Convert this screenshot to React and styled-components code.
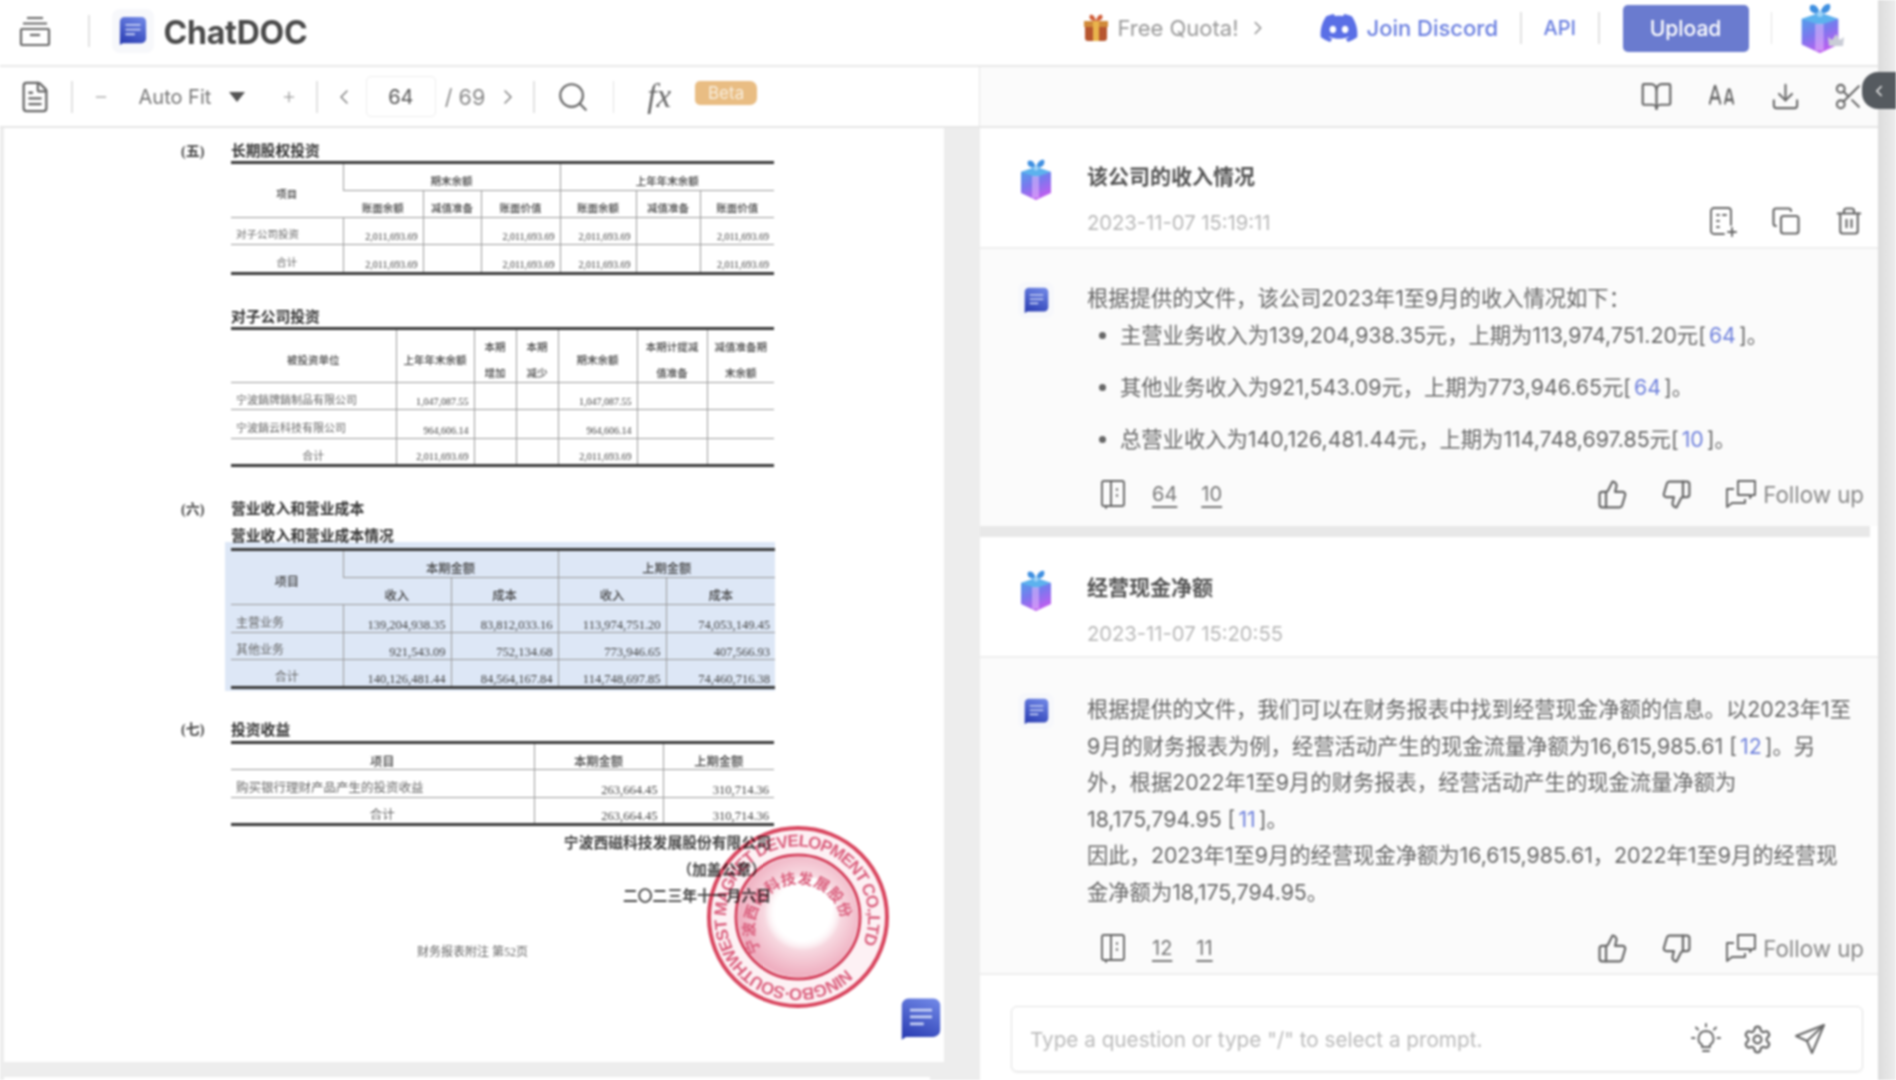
import React from 'react';
import styled, { createGlobalStyle } from 'styled-components';
import {
  FileText, Minus, Plus, ChevronLeft, ChevronRight, Search, BookOpen, ALargeSmall,
  Download, Scissors, Copy, Trash2, ThumbsUp, ThumbsDown, Settings
} from 'lucide-react';
import { FaDiscord } from 'react-icons/fa';

const GlobalStyle = createGlobalStyle`
  html, body { margin: 0; padding: 0; background: #fff; }
  body { font-family: Inter, "Noto Sans CJK SC", sans-serif; color: #666; }
  * { box-sizing: border-box; }
`;

const StackIcon = () => (
  <svg width="32" height="32" viewBox="0 0 32 32" fill="none" stroke="#666" strokeWidth="2.2">
    <path d="M8 3h16M4 8.5h24" />
    <rect x="2" y="14" width="28" height="16" rx="1" />
    <path d="M11 20h10" />
  </svg>
);

const LogoMark = ({ size = 30, gid = 'lg' }) => (
  <svg width={size} height={size} viewBox="0 0 30 32">
    <defs>
      <linearGradient id={gid} x1="0.7" y1="0" x2="0.3" y2="1">
        <stop offset="0" stopColor="#6d84e4" />
        <stop offset="1" stopColor="#2c3fb4" />
      </linearGradient>
    </defs>
    <path d="M6 1h18a5 5 0 0 1 5 5v18a5 5 0 0 1-5 5H4l-3 2V6a5 5 0 0 1 5-5z" fill={`url(#${gid})`} />
    <path d="M7 9.5h16M7 14.5h16M7 19.5h10" stroke="#c6d0f5" strokeWidth="2" />
  </svg>
);

const GiftBox = ({ w = 36, gid = 'gb' }) => (
  <svg width={w} height={w * 1.14} viewBox="0 0 36 41">
    <defs>
      <linearGradient id={gid} x1="0.2" y1="0" x2="0.6" y2="1">
        <stop offset="0" stopColor="#4da3ea" />
        <stop offset="0.5" stopColor="#7b78ee" />
        <stop offset="1" stopColor="#c45cf0" />
      </linearGradient>
    </defs>
    <path d="M3 13l15-5 15 5v21l-15 7-15-7z" fill={`url(#${gid})`} />
    <path d="M18 8l15 5-15 5-15-5z" fill="#5cb2ee" />
    <path d="M14 17h7v22h-7z" fill="#e4b8fb" opacity="0.55" />
    <path d="M10 2c4-2 7 2 8 7-5 0-10-2-8-7zM26 1c-4-1-7 3-8 8 5 0 10-3 8-8z" fill="#3f8fe0" />
    <circle cx="18" cy="9" r="2.5" fill="#9fd3f7" />
  </svg>
);

const QuotaGift = () => (
  <svg width="26" height="28" viewBox="0 0 26 28">
    <path d="M2 9h22v15a3 3 0 0 1-3 3H5a3 3 0 0 1-3-3z" fill="#b7562f" />
    <path d="M1 7h24v6H1z" fill="#d08a3a" />
    <path d="M10 7h6v20h-6z" fill="#e9b44c" />
    <path d="M7 1c3-1 5 2 6 6-4 0-8-2-6-6zM19 1c-3-1-5 2-6 6 4 0 8-2 6-6z" fill="#cf5b36" />
  </svg>
);

const Crown = () => (
  <svg width="16" height="14" viewBox="0 0 16 14">
    <path d="M1 12L0 3l4 3 4-6 4 6 4-3-1 9z" fill="#c9ccd6" />
  </svg>
);

const FileNoteIcon = () => (
  <svg width="30" height="32" viewBox="0 0 30 32" fill="none" stroke="#666" strokeWidth="1.9" strokeLinecap="round">
    <path d="M16 28H6a3 3 0 0 1-3-3V5a3 3 0 0 1 3-3h14a3 3 0 0 1 3 3v14" />
    <path d="M9 9h2M9 15h2M15 9h3M9 21h2" />
    <path d="M24 22v8M20 26h8" />
  </svg>
);

const NoteBookIcon = () => (
  <svg width="26" height="30" viewBox="0 0 26 30" fill="none" stroke="#666" strokeWidth="1.9" strokeLinecap="round">
    <rect x="2" y="2" width="22" height="25" rx="2" />
    <path d="M11 2v25M17 10v1M17 16v1M6 27v2" />
  </svg>
);

const FollowIcon = () => (
  <svg width="32" height="30" viewBox="0 0 32 30" fill="none" stroke="#666" strokeWidth="1.9" strokeLinejoin="round">
    <path d="M13 2h17v14h-3l-2 3v-3H13z" />
    <path d="M9 10H2v18l5-4h13v-4" />
  </svg>
);

const BulbIcon = () => (
  <svg width="30" height="32" viewBox="0 0 30 32" fill="none" stroke="#666" strokeWidth="1.9" strokeLinecap="round">
    <path d="M15 8a7.5 7.5 0 0 0-4 13.8V24h8v-2.2A7.5 7.5 0 0 0 15 8z" />
    <path d="M12 28h6M15 1v2.5M5 4.5l2 2M25 4.5l-2 2M1 15h2.5M26.5 15H29" />
  </svg>
);

const SendIcon = () => (
  <svg width="32" height="32" viewBox="0 0 32 32" fill="none" stroke="#666" strokeWidth="2" strokeLinejoin="round">
    <path d="M30 2L2 13l11 5 5 12z" />
    <path d="M13 18L30 2" />
  </svg>
);

const TABLE_ONE = {
  cols: [112, 80, 58, 79, 76, 64, 74],
  size: 10,
  head: 10.5,
  label: 10.5,
  heights: [28, 27, 27, 29],
  rows: [
    [{ t: '项目', rows: 2, c: 1, head: 1 }, { t: '期末余额', span: 3, c: 1, head: 1 }, { t: '上年年末余额', span: 3, c: 1, head: 1 }],
    ['账面余额', '减值准备', '账面价值', '账面余额', '减值准备', '账面价值'].map((t) => ({ t, c: 1, head: 1 })),
    [{ t: '对子公司投资', l: 1 }, '2,011,693.69', '', '2,011,693.69', '2,011,693.69', '', '2,011,693.69'],
    [{ t: '合计', c: 1 }, '2,011,693.69', '', '2,011,693.69', '2,011,693.69', '', '2,011,693.69']
  ]
};

const TABLE_TWO = {
  cols: [165, 78, 42, 42, 79, 70, 67],
  size: 10,
  head: 10.5,
  label: 11,
  heights: [54, 27, 29, 27],
  rows: [
    [
      { t: '被投资单位', c: 1, head: 1 },
      { t: '上年年末余额', c: 1, head: 1, w: 1 },
      { t: '本期增加', c: 1, head: 1, w: 1 },
      { t: '本期减少', c: 1, head: 1, w: 1 },
      { t: '期末余额', c: 1, head: 1 },
      { t: '本期计提减值准备', c: 1, head: 1, w: 1 },
      { t: '减值准备期末余额', c: 1, head: 1, w: 1 }
    ],
    [{ t: '宁波銷牌銷制品有限公司', l: 1 }, '1,047,087.55', '', '', '1,047,087.55', '', ''],
    [{ t: '宁波銷云科技有限公司', l: 1 }, '964,606.14', '', '', '964,606.14', '', ''],
    [{ t: '合计', c: 1 }, '2,011,693.69', '', '', '2,011,693.69', '', '']
  ]
};

const TABLE_THREE = {
  cols: [112, 108, 107, 108, 109],
  size: 12.5,
  head: 12.3,
  label: 12,
  heights: [28, 27, 28, 27, 28],
  rows: [
    [{ t: '项目', rows: 2, c: 1, head: 1 }, { t: '本期金额', span: 2, c: 1, head: 1 }, { t: '上期金额', span: 2, c: 1, head: 1 }],
    ['收入', '成本', '收入', '成本'].map((t) => ({ t, c: 1, head: 1 })),
    [{ t: '主营业务', l: 1 }, '139,204,938.35', '83,812,033.16', '113,974,751.20', '74,053,149.45'],
    [{ t: '其他业务', l: 1 }, '921,543.09', '752,134.68', '773,946.65', '407,566.93'],
    [{ t: '合计', c: 1 }, '140,126,481.44', '84,564,167.84', '114,748,697.85', '74,460,716.38']
  ]
};

const TABLE_FOUR = {
  cols: [303, 129, 111],
  size: 12.5,
  head: 12.3,
  label: 12.5,
  heights: [27, 28, 27],
  rows: [
    [{ t: '项目', c: 1, head: 1 }, { t: '本期金额', c: 1, head: 1 }, { t: '上期金额', c: 1, head: 1 }],
    [{ t: '购买银行理财产品产生的投资收益', l: 1 }, '263,664.45', '310,714.36'],
    [{ t: '合计', c: 1 }, '263,664.45', '310,714.36']
  ]
};

const SheetTable = ({ data }) => (
  <Sheet>
    <colgroup>
      {data.cols.map((w, i) => <col key={i} width={w} />)}
    </colgroup>
    <tbody>
      {data.rows.map((row, r) => (
        <SheetRow key={r} $h={data.heights[r]}>
          {row.map((cell, i) => {
            const c = typeof cell === 'string' ? { t: cell } : cell;
            const isText = c.head || c.l || c.c;
            return (
              <SheetCell
                key={i}
                colSpan={c.span}
                rowSpan={c.rows}
                $align={c.c ? 'center' : c.l ? 'left' : 'right'}
                $head={c.head}
                $wrap={c.w}
                $label={c.l || c.c}
                $fs={c.head ? data.head : c.l || c.c ? data.label : data.size}
              >
                {isText ? <CellText>{c.t}</CellText> : c.t}
              </SheetCell>
            );
          })}
        </SheetRow>
      ))}
    </tbody>
  </Sheet>
);

const Stamp = () => (
  <StampWrap>
    <svg width="190" height="190" viewBox="0 0 190 190">
      <defs>
        <radialGradient id="stampFade" cx="0.54" cy="0.46" r="0.52">
          <stop offset="0.42" stopColor="#fff" stopOpacity="0" />
          <stop offset="0.62" stopColor="#f7d8e0" />
          <stop offset="1" stopColor="#efb0c1" />
        </radialGradient>
        <path id="ringEn" d="M143 147 A71 71 0 1 1 151 138" />
        <path id="ringCn" d="M58 129 A44 44 0 1 1 139 100" />
      </defs>
      <circle cx="95" cy="95" r="89" fill="#fdf1f4" stroke="#d9465f" strokeWidth="4" />
      <circle cx="95" cy="95" r="62" fill="#fff" stroke="#d4405c" strokeWidth="3" />
      <circle cx="95" cy="95" r="60" fill="url(#stampFade)" />
      <path d="M97 56c12-5 24 3 30 14 7 13 3 24-6 32-8 13-19 24-32 15-7-10-19-14-15-29 2-15 11-28 23-32z" fill="#fff" />
      <StampText fontSize="17" fontWeight="700">
        <textPath href="#ringEn" textLength="415">NINGBO·SOUTHWEST MAGNET DEVELOPMENT CO.,LTD</textPath>
      </StampText>
      <StampText fontSize="15" fontWeight="700">
        <textPath href="#ringCn" textLength="215">宁波西磁科技发展股份有限公司</textPath>
      </StampText>
    </svg>
  </StampWrap>
);

const QuestionBlock = ({ gid, title, date, actions, top }) => (
  <Question $top={top}>
    <AvatarCell><GiftBox w={36} gid={gid} /></AvatarCell>
    <div>
      <QuestionTitle>{title}</QuestionTitle>
      <DateRow>
        <DateText>{date}</DateText>
        {actions && (
          <QuestionTools>
            <FileNoteIcon />
            <Copy size={30} strokeWidth={1.7} />
            <Trash2 size={30} strokeWidth={1.7} />
          </QuestionTools>
        )}
      </DateRow>
    </div>
  </Question>
);

const AnswerActions = ({ pages, top }) => (
  <Actions $top={top}>
    <NoteBookIcon />
    <PageRefs>
      {pages.map((p) => <PageRef key={p}>{p}</PageRef>)}
    </PageRefs>
    <ActionRight>
      <ThumbsUp size={31} strokeWidth={1.7} />
      <ThumbsDown size={31} strokeWidth={1.7} />
      <FollowUp>
        <FollowIcon />
        Follow up
      </FollowUp>
    </ActionRight>
  </Actions>
);

const App = () => (
  <>
    <GlobalStyle />
    <Shell>
      <Main>
        <Header>
          <StackIcon />
          <BarRule $left={37} $right={22} />
          <LogoTile><LogoMark /></LogoTile>
          <Brand>ChatDOC</Brand>
          <HeaderNav>
            <QuotaGift />
            <QuotaText>Free Quota!</QuotaText>
            <ChevronRight size={22} strokeWidth={1.5} color="#888" />
            <DiscordLink>
              <FaDiscord size={40} color="#5a6fe6" />
              Join Discord
            </DiscordLink>
            <BarRule $left={22} $right={22} />
            <ApiLink>API</ApiLink>
            <BarRule $left={22} $right={23} />
            <UploadButton>Upload</UploadButton>
            <BarRule $left={22} $right={26} />
            <AvatarWrap>
              <GiftBox w={44} gid="gbHead" />
              <CrownBadge><Crown /></CrownBadge>
            </AvatarWrap>
          </HeaderNav>
        </Header>

        <ToolRow>
          <DocTools>
            <FileText size={34} strokeWidth={1.6} />
            <BarRule $left={19} $right={20} />
            <Minus size={16} strokeWidth={1.6} color="#888" />
            <FitLabel>Auto Fit</FitLabel>
            <FitCaret />
            <PlusWrap><Plus size={16} strokeWidth={1.6} color="#888" /></PlusWrap>
            <BarRule $left={19} $right={14} />
            <ChevronLeft size={24} strokeWidth={1.4} color="#777" />
            <PageInput>64</PageInput>
            <PageTotal>/ 69</PageTotal>
            <ChevronRight size={24} strokeWidth={1.4} color="#777" />
            <BarRule $left={13} $right={21} />
            <Search size={34} strokeWidth={1.5} />
            <BarRule $left={23} $right={33} />
            <FxMark>fx</FxMark>
            <BetaTag>Beta</BetaTag>
          </DocTools>
          <ChatTools>
            <BookOpen size={33} strokeWidth={1.6} />
            <TallGlyph><ALargeSmall size={33} strokeWidth={1.6} /></TallGlyph>
            <Download size={31} strokeWidth={1.6} />
            <Scissors size={31} strokeWidth={1.6} />
          </ChatTools>
        </ToolRow>

        <Body>
          <DocPane>
            <Page>
              <SectionHead $top={11.5}>
                <SectionNo>(五)</SectionNo>
                <SectionTitle>长期股权投资</SectionTitle>
              </SectionHead>
              <TableBlock><SheetTable data={TABLE_ONE} /></TableBlock>

              <SectionHead $top={31}>
                <SectionNo />
                <SectionTitle>对子公司投资</SectionTitle>
              </SectionHead>
              <TableBlock><SheetTable data={TABLE_TWO} /></TableBlock>

              <SectionHead $top={31}>
                <SectionNo>(六)</SectionNo>
                <SectionTitle>营业收入和营业成本</SectionTitle>
              </SectionHead>
              <SectionHead $top={7}>
                <SectionNo />
                <SectionTitle>营业收入和营业成本情况</SectionTitle>
              </SectionHead>
              <HighlightBlock><SheetTable data={TABLE_THREE} /></HighlightBlock>

              <SectionHead $top={27.5}>
                <SectionNo>(七)</SectionNo>
                <SectionTitle>投资收益</SectionTitle>
              </SectionHead>
              <TableBlock $top={3}><SheetTable data={TABLE_FOUR} /></TableBlock>

              <SignBlock>
                <SignLine>宁波西磁科技发展股份有限公司</SignLine>
                <SignLine $indent={5}>（加盖公章）</SignLine>
                <SignLine>二〇二三年十一月六日</SignLine>
              </SignBlock>
              <PageFoot>财务报表附注 第52页</PageFoot>

              <Stamp />
              <ChatFab><LogoMark size={44} gid="lgFab" /></ChatFab>
            </Page>
            <NextPage />
          </DocPane>

          <ChatPane>
            <QuestionBlock gid="gbQ1" top={31} title="该公司的收入情况" date="2023-11-07 15:19:11" actions />
            <Answer $top={31} $bottom={15}>
              <AvatarCell $top={2}><LogoTile $small><LogoMark size={27} gid="lgA1" /></LogoTile></AvatarCell>
              <div>
                <AnswerText>根据提供的文件，该公司2023年1至9月的收入情况如下：</AnswerText>
                <Bullets>
                  <Bullet>主营业务收入为139,204,938.35元，上期为113,974,751.20元[<Ref>64</Ref>]。</Bullet>
                  <Bullet>其他业务收入为921,543.09元，上期为773,946.65元[<Ref>64</Ref>]。</Bullet>
                  <Bullet>总营业收入为140,126,481.44元，上期为114,748,697.85元[<Ref>10</Ref>]。</Bullet>
                </Bullets>
                <AnswerActions top={20} pages={['64', '10']} />
              </div>
            </Answer>
            <ThickRule />
            <QuestionBlock gid="gbQ2" top={33} title="经营现金净额" date="2023-11-07 15:20:55" />
            <Answer $top={33} $bottom={8}>
              <AvatarCell $top={2}><LogoTile $small><LogoMark size={27} gid="lgA2" /></LogoTile></AvatarCell>
              <div>
                <AnswerText>
                  根据提供的文件，我们可以在财务报表中找到经营现金净额的信息。以2023年1至<br />
                  9月的财务报表为例，经营活动产生的现金流量净额为16,615,985.61 [<Ref>12</Ref>]。另<br />
                  外，根据2022年1至9月的财务报表，经营活动产生的现金流量净额为<br />
                  18,175,794.95 [<Ref>11</Ref>]。<br />
                  因此，2023年1至9月的经营现金净额为16,615,985.61，2022年1至9月的经营现<br />
                  金净额为18,175,794.95。
                </AnswerText>
                <AnswerActions top={21} pages={['12', '11']} />
              </div>
            </Answer>
            <InputArea>
              <InputBox>
                <Placeholder>Type a question or type "/" to select a prompt.</Placeholder>
                <InputTools>
                  <BulbIcon />
                  <Settings size={31} strokeWidth={1.7} />
                  <SendIcon />
                </InputTools>
              </InputBox>
            </InputArea>
          </ChatPane>
        </Body>
      </Main>
      <SideStrip />
      <CollapseTab><ChevronLeft size={18} color="#fff" strokeWidth={1.6} /></CollapseTab>
    </Shell>
  </>
);

const Shell = styled.div`
  position: relative;
  display: flex;
  width: 1896px;
  height: 1080px;
  overflow: hidden;
  filter: blur(0.8px);
`;

const Main = styled.div`
  width: 1878px;
  display: flex;
  flex-direction: column;
`;

const SideStrip = styled.div`
  flex: 1;
  background: linear-gradient(90deg, #dcdcdc, #ececec);
`;

const CollapseTab = styled.div`
  position: absolute;
  right: 0;
  top: 72px;
  width: 34px;
  height: 37px;
  background: #555a5f;
  border-radius: 16px 0 0 16px;
  display: flex;
  align-items: center;
  justify-content: center;
`;

const Header = styled.header`
  height: 67px;
  flex: none;
  display: flex;
  align-items: center;
  padding: 0 36px 4px 19px;
  background: #fff;
  border-bottom: 2px solid #e8e8e8;
`;

const BarRule = styled.span`
  flex: none;
  width: 1.5px;
  height: 32px;
  background: #e2e2e2;
  margin: 0 ${(p) => p.$right}px 0 ${(p) => p.$left}px;
`;

const LogoTile = styled.div`
  display: flex;
  align-items: center;
  justify-content: center;
  width: ${(p) => (p.$small ? 36 : 42)}px;
  height: ${(p) => (p.$small ? 36 : 44)}px;
  border-radius: 8px;
  background: #f7f8fb;
`;

const Brand = styled.div`
  margin: 3px 0 0 10px;
  font-size: 32px;
  font-weight: 700;
  color: #4a4a4a;
  letter-spacing: -0.2px;
`;

const HeaderNav = styled.nav`
  margin: -5px 0 0 auto;
  display: flex;
  align-items: center;
  font-size: 22px;
`;

const QuotaText = styled.span`
  margin: 0 8px 0 8px;
  color: #999;
`;

const DiscordLink = styled.a`
  display: flex;
  align-items: center;
  gap: 8px;
  margin-left: 50px;
  color: #6a7fe0;
  font-weight: 500;
`;

const ApiLink = styled.a`
  color: #6a7fe0;
  font-size: 20px;
  font-weight: 500;
`;

const UploadButton = styled.button`
  width: 126px;
  height: 47px;
  border: none;
  border-radius: 5px;
  background: #6a7bcf;
  color: #fff;
  font: 500 21px Inter, sans-serif;
`;

const AvatarWrap = styled.div`
  position: relative;
  display: flex;
  width: 44px;
`;

const CrownBadge = styled.span`
  position: absolute;
  right: -2px;
  bottom: 0;
`;

const ToolRow = styled.div`
  height: 61px;
  flex: none;
  display: flex;
  background: #fff;
  border-bottom: 2px solid #e6e6e6;
`;

const DocTools = styled.div`
  width: 980px;
  flex: none;
  display: flex;
  align-items: center;
  padding-left: 18px;
  border-right: 1.5px solid #e6e6e6;
  color: #666;
`;

const FitLabel = styled.span`
  margin-left: 30px;
  font-size: 20px;
  color: #777;
`;

const FitCaret = styled.span`
  margin-left: 18px;
  border-left: 8.5px solid transparent;
  border-right: 8.5px solid transparent;
  border-top: 10px solid #555;
`;

const PlusWrap = styled.span`
  display: flex;
  margin-left: 36px;
`;

const PageInput = styled.div`
  width: 70px;
  height: 41px;
  margin-left: 10px;
  display: flex;
  align-items: center;
  justify-content: center;
  border: 1.5px solid #eee;
  border-radius: 5px;
  font-size: 20px;
  color: #555;
`;

const PageTotal = styled.span`
  margin: 0 11px 0 9px;
  font-size: 21.5px;
  color: #888;
`;

const FxMark = styled.span`
  font: italic 33px "Liberation Serif", serif;
  color: #666;
`;

const BetaTag = styled.span`
  margin: -8px 0 0 24px;
  width: 62px;
  height: 24px;
  display: flex;
  align-items: center;
  justify-content: center;
  border-radius: 5px 7px 7px 5px;
  background: #e9bd83;
  color: #f8eedd;
  font-size: 17px;
`;

const ChatTools = styled.div`
  flex: 1;
  display: flex;
  align-items: center;
  justify-content: flex-end;
  gap: 32px;
  padding-right: 14px;
  background: #fbfbfb;
  color: #666;
`;

const TallGlyph = styled.span`
  display: flex;
  transform: scale(0.85, 1.25);
`;

const Body = styled.div`
  flex: 1;
  min-height: 0;
  display: flex;
`;

const DocPane = styled.div`
  width: 980px;
  flex: none;
  padding: 0 36px 0 4px;
  background: #ededed;
  overflow: hidden;
`;

const Page = styled.div`
  position: relative;
  display: flow-root;
  height: 934px;
  padding-left: 177px;
  background: #fff;
  font-family: "Liberation Serif", "Noto Sans CJK SC", serif;
  color: #333;
`;

const NextPage = styled.div`
  height: 10px;
  width: 926px;
  margin-top: 15px;
  background: #fff;
`;

const SectionHead = styled.div`
  display: flex;
  align-items: center;
  height: 20px;
  margin-top: ${(p) => p.$top}px;
`;

const SectionNo = styled.span`
  width: 50px;
  font-size: 14px;
  font-weight: 700;
  color: #444;
`;

const SectionTitle = styled.span`
  font-size: 14.8px;
  font-weight: 700;
  color: #333;
`;

const TableBlock = styled.div`
  margin: ${(p) => p.$top || 1}px 0 0 50px;
  width: 543px;
`;

const HighlightBlock = styled.div`
  margin: -3px 0 0 44px;
  padding: 6px 0 2px 6px;
  width: 550px;
  background: #dde7f6;
`;

const Sheet = styled.table`
  width: 543px;
  table-layout: fixed;
  border-collapse: collapse;
  border-top: 3px solid #3a3a3a;
  border-bottom: 3px solid #3a3a3a;
  color: #444;
`;

const SheetRow = styled.tr`
  height: ${(p) => p.$h}px;
`;

const SheetCell = styled.td`
  padding: ${(p) => (p.$head ? '0 6px' : '0 5px 1px')};
  border-bottom: 1px solid #9a9a9a;
  border-left: 1px solid #9a9a9a;
  text-align: ${(p) => p.$align};
  vertical-align: ${(p) => (p.$head || p.$label ? 'middle' : 'bottom')};
  font-size: ${(p) => p.$fs}px;
  font-weight: ${(p) => (p.$head ? 500 : 400)};
  line-height: ${(p) => (p.$wrap ? '26px' : '12px')};
  white-space: ${(p) => (p.$wrap ? 'normal' : 'nowrap')};
  color: ${(p) => (p.$label && !p.$head ? '#666' : '#444')};
  &:first-child { border-left: none; }
`;

const CellText = styled.span`
  display: block;
  transform: translateY(5px);
`;

const SignBlock = styled.div`
  width: 590px;
  margin-top: 4px;
  text-align: right;
  font-size: 14.8px;
`;

const SignLine = styled.div`
  height: 26.5px;
  line-height: 26.5px;
  padding-right: ${(p) => p.$indent || 0}px;
  font-weight: 700;
  color: #444;
`;

const PageFoot = styled.div`
  margin: 32px 0 0 236px;
  font-size: 12px;
  color: #666;
`;

const StampWrap = styled.div`
  position: absolute;
  left: 699px;
  top: 694px;
  mix-blend-mode: multiply;
  display: flex;
`;

const StampText = styled.text`
  fill: #da5f7d;
  font-family: "Liberation Sans", "Noto Sans CJK SC", sans-serif;
`;

const ChatFab = styled.div`
  position: absolute;
  left: 895px;
  top: 869px;
  display: flex;
`;

const ChatPane = styled.div`
  flex: 1;
  min-width: 0;
  display: flex;
  flex-direction: column;
  background: #fff;
`;

const Question = styled.section`
  display: grid;
  grid-template-columns: 107px 1fr;
  height: 121px;
  padding: ${(p) => p.$top}px 14px 0 0;
  border-bottom: 2px solid #eee;
`;

const AvatarCell = styled.div`
  padding: ${(p) => p.$top || 0}px 0 0 38px;
`;

const QuestionTitle = styled.h3`
  margin: 0;
  font-size: 21px;
  font-weight: 600;
  line-height: 36px;
  color: #555;
`;

const DateRow = styled.div`
  display: flex;
  align-items: center;
  justify-content: space-between;
  min-height: 38px;
  margin-top: 8px;
`;

const DateText = styled.span`
  font-size: 20.2px;
  color: #b8b8b8;
`;

const QuestionTools = styled.div`
  display: flex;
  gap: 33px;
  color: #666;
`;

const Answer = styled.section`
  display: grid;
  grid-template-columns: 107px 1fr;
  padding: ${(p) => p.$top}px 14px ${(p) => p.$bottom}px 0;
  background: #fbfbfb;
`;

const AnswerText = styled.div`
  font-size: 21.3px;
  line-height: 36.5px;
  color: #666;
  white-space: nowrap;
`;

const Bullets = styled.ul`
  margin: 0;
  padding: 0 0 0 33px;
  color: #666;
`;

const Bullet = styled.li`
  font-size: 21.3px;
  line-height: 36.5px;
  margin-bottom: 15.5px;
  white-space: nowrap;
  &:last-child { margin-bottom: 0; }
`;

const Ref = styled.span`
  margin: 0 3px;
  color: #6f81dc;
`;

const Actions = styled.div`
  display: flex;
  align-items: center;
  height: 34px;
  margin: ${(p) => p.$top}px 0 0 13px;
  color: #666;
`;

const PageRefs = styled.div`
  display: flex;
  gap: 24px;
  margin-left: 26px;
`;

const PageRef = styled.span`
  font-size: 20px;
  color: #777;
  text-decoration: underline;
  text-underline-offset: 5px;
`;

const ActionRight = styled.div`
  margin-left: auto;
  display: flex;
  align-items: center;
  gap: 33px;
`;

const FollowUp = styled.span`
  display: flex;
  align-items: center;
  gap: 6px;
  font-size: 22.3px;
  color: #888;
`;

const ThickRule = styled.div`
  height: 11px;
  margin-right: 8px;
  background: #e8e8e8;
`;

const InputArea = styled.div`
  flex: 1;
  padding: 31px 15px 8px 31px;
  border-top: 2px solid #eee;
  background: #fff;
`;

const InputBox = styled.div`
  height: 66px;
  display: flex;
  align-items: center;
  justify-content: space-between;
  padding: 0 36px 0 18px;
  border: 1.5px solid #e2e2e2;
  border-radius: 6px;
  box-shadow: 0 1px 2px rgba(0, 0, 0, 0.06);
`;

const Placeholder = styled.span`
  font-size: 20.7px;
  color: #bbb;
`;

const InputTools = styled.div`
  display: flex;
  align-items: center;
  gap: 21px;
  color: #666;
`;

export default App;
